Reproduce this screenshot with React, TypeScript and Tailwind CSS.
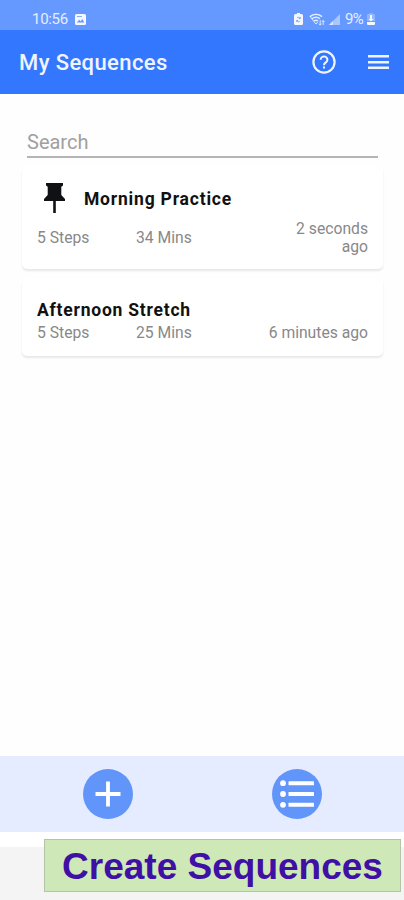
import type { ReactNode } from 'react';

type Sequence = {
  title: string;
  steps: string;
  duration: string;
  updated: string;
  pinned?: boolean;
};

const sequences: Sequence[] = [
  { title: 'Morning Practice', steps: '5 Steps', duration: '34 Mins', updated: '2 seconds ago', pinned: true },
  { title: 'Afternoon Stretch', steps: '5 Steps', duration: '25 Mins', updated: '6 minutes ago' },
];

function StatusBar() {
  return (
    <div className="flex h-[30px] items-center bg-[#6699ff] pt-2 pr-[29px] pl-8 text-[15px] leading-none text-[#e6eeff]">
      <span className="w-[43px] tracking-[-0.3px]">10:56</span>
      <svg width="11" height="11" viewBox="0 0 11 11" fill="none">
        <rect width="11" height="11" rx="1.5" fill="#f4f7ff" />
        <path d="M1.8 8.500 4.200 5.800l1.500 1.400 1.700-2.100 1.900 3.400z" fill="#6699ff" />
        <path d="M2 2.500h5" stroke="#6699ff" strokeWidth="0.8" />
      </svg>
      <div className="ml-auto flex items-center">
        <svg className="mr-[6px]" width="9" height="12" viewBox="0 0 9 12" fill="none">
          <path d="M3 0h3v1h1.5A1.5 1.5 0 0 1 9 2.5v8A1.5 1.5 0 0 1 7.5 12h-6A1.5 1.5 0 0 1 0 10.5v-8A1.5 1.5 0 0 1 1.5 1H3z" fill="#f4f7ff" />
          <path d="M3 5a1.8 1.8 0 0 1 3.2.5M6 8a1.8 1.8 0 0 1-3.2-.5M6.3 4v1.6H4.800M2.700 9V7.400h1.500" stroke="#6699ff" strokeWidth="0.8" />
        </svg>
        <svg className="mr-[4px]" width="16" height="13" viewBox="0 0 16 13" fill="none" stroke="#e6eeff" strokeWidth="1.4">
          <path d="M1 3.6C4.5.6 9.5.6 13 3.6M3 5.8c2.5-2 5.5-2 8 0M5 8c1.3-1 2.7-1 4 0" />
          <path d="m1 3.6 6 7.4 2-2.3" strokeWidth="0.9" />
          <path d="M11.2 7v5M9.8 10.600l1.400 1.500 1.400-1.500M14.200 12V7.500M13 9l1.200-1.400L15.400 9" strokeWidth="0.9" />
        </svg>
        <svg className="mr-[5px]" width="11" height="11" viewBox="0 0 11 11">
          <path d="M11 0v11H0z" fill="#a9c6ff" />
          <path d="M4 7v4H0z" fill="#d9e6ff" />
        </svg>
        <span className="w-[22px] tracking-[-0.6px]">9%</span>
        <svg width="8" height="12" viewBox="0 0 8 12">
          <path d="M2.5 0h3v1H7a1 1 0 0 1 1 1v6H0V2a1 1 0 0 1 1-1h1.500z" fill="#92b7ff" />
          <path d="M3 2h2v4h1.500L4 8.500 1.500 6H3zM0 9h8v2a1 1 0 0 1-1 1H1a1 1 0 0 1-1-1z" fill="#f4f7ff" />
        </svg>
      </div>
    </div>
  );
}

function Header() {
  return (
    <header className="flex h-[63.5px] items-center bg-[#3377ff] pr-[15px] pl-[19px] text-[#f0f4ff]">
      <h1 className="mt-[3px] text-[22px] leading-none font-medium tracking-[0.4px]">My Sequences</h1>
      <button className="ml-auto" aria-label="Help">
        <svg width="24" height="24" viewBox="0 0 24 24" fill="none" stroke="currentColor" strokeWidth="2.2">
          <circle cx="12" cy="12" r="10.6" />
          <path d="M8.600 9.700a3.400 3.200 0 1 1 5.800 2.200c-1.300 1.200-2.400 1.500-2.400 3.300" strokeWidth="2" />
          <path d="M11 16.5h2v2h-2z" fill="currentColor" stroke="none" />
        </svg>
      </button>
      <button className="ml-8" aria-label="Menu">
        <svg width="21" height="16" viewBox="0 0 21 16" fill="currentColor">
          <path d="M0 1h21v2.400H0zM0 7h21v2.400H0zM0 12.600h21V15H0z" />
        </svg>
      </button>
    </header>
  );
}

function PinIcon() {
  return (
    <svg width="21" height="30" viewBox="0 0 21 30" fill="#101114">
      <path d="M2 0h17v2.500l-1.700 1.200v8.300l3.700 4V18h-9.200v12H9.200V18H0v-2l3.700-4V3.700L2 2.500z" />
    </svg>
  );
}

function SequenceCard({ sequence }: { sequence: Sequence }) {
  const { title, steps, duration, updated, pinned } = sequence;
  return (
    <li
      className={`rounded-[5px] bg-white px-[15px] shadow-[0_2px_2px_rgba(0,0,0,0.09)] ${
        pinned ? 'h-[103px] pt-[17px]' : 'h-[78px] pt-[21px]'
      }`}
    >
      <div className={pinned ? 'flex h-[37px] items-start pl-[7px]' : 'h-[25px]'}>
        {pinned && <PinIcon />}
        <h2
          className={`text-[17.5px] leading-[22px] font-bold text-[#111111] ${
            pinned ? 'mt-[5px] ml-[19px] tracking-[0.8px]' : 'tracking-[0.77px]'
          }`}
        >
          {title}
        </h2>
      </div>
      <div className="flex items-center text-[15.7px] leading-[18px] text-[#888888]">
        <span className="w-[99px]">{steps}</span>
        <span className="w-[98px]">{duration}</span>
        <span className={`ml-auto text-right ${pinned ? 'w-[90px]' : 'whitespace-nowrap'}`}>{updated}</span>
      </div>
    </li>
  );
}

function RoundButton({ label, children }: { label: string; children: ReactNode }) {
  return (
    <button aria-label={label} className="flex size-[50px] items-center justify-center rounded-full bg-[#6195fa]">
      {children}
    </button>
  );
}

function BottomBar() {
  return (
    <nav className="flex h-[76px] items-center justify-between bg-[#e5ecff] pr-[82px] pb-px pl-[83px]">
      <RoundButton label="Add sequence">
        <svg width="26" height="26" viewBox="0 0 26 26" fill="none" stroke="white" strokeWidth="3.8">
          <path d="M13 .5v25M.5 13h25" />
        </svg>
      </RoundButton>
      <RoundButton label="Sequence list">
        <svg width="34" height="28" viewBox="0 0 34 28" fill="white">
          <circle cx="3" cy="3.2" r="2.9" />
          <circle cx="3" cy="14" r="2.9" />
          <circle cx="3" cy="24.8" r="2.9" />
          <rect x="8.5" y="1.2" width="25.5" height="4" rx="0.5" />
          <rect x="8.5" y="12" width="25.5" height="4" rx="0.5" />
          <rect x="8.5" y="22.8" width="25.5" height="4" rx="0.5" />
        </svg>
      </RoundButton>
    </nav>
  );
}

export default function App() {
  return (
    <div className="flex h-[900px] w-[404px] flex-col overflow-hidden bg-[#fefefe] font-['Roboto',sans-serif]">
      <StatusBar />
      <Header />
      <main className="flex-1 pt-[35.5px] pr-[21px] pl-[22px]">
        <input
          type="text"
          placeholder="Search"
          className="ml-[5px] block h-[29px] w-[351px] border-b-2 border-[#b4b4b4] pb-px text-xl leading-none text-[#222222] outline-none placeholder:text-[#a0a0a0]"
        />
        <ul className="mt-[8px] flex flex-col gap-[9px]">
          {sequences.map((sequence) => (
            <SequenceCard key={sequence.title} sequence={sequence} />
          ))}
        </ul>
      </main>
      <BottomBar />
      <footer className="h-[68px] border-t-[15px] border-white bg-[#f4f4f4] pr-[3px] pl-[44px]">
        <div className="-mt-[8px] flex h-[53px] items-center justify-center border border-[#b5c3a7] bg-[#cee9b7] pt-[2px] font-['Liberation_Sans',sans-serif] text-[37px] leading-none font-bold whitespace-nowrap text-[#400fa5]">
          Create Sequences
        </div>
      </footer>
    </div>
  );
}
